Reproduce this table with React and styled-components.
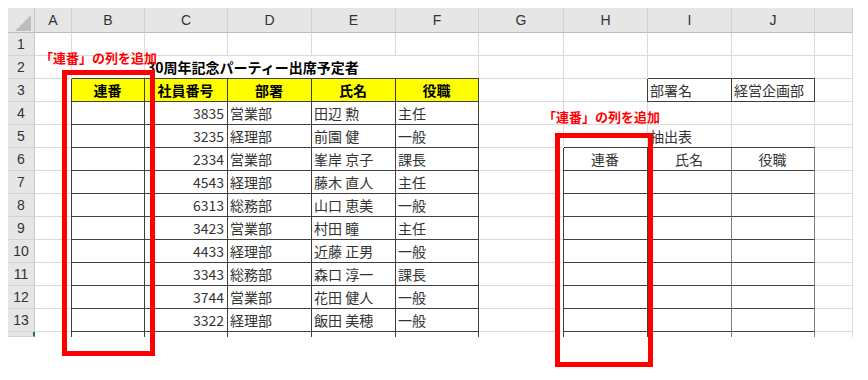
import React from "react";
import styled, { createGlobalStyle } from "styled-components";

const GlobalStyle = createGlobalStyle`
  html, body {
    margin: 0;
    padding: 0;
    background: #fff;
  }
  body {
    font-family: "Noto Sans CJK JP", "Noto Sans", sans-serif;
  }
`;

const LETTERS = ["A", "B", "C", "D", "E", "F", "G", "H", "I", "J", ""];
const WIDTHS = [37, 73, 83, 84, 84, 83, 85, 84, 84, 83, 38];
const DARK = "#3f3f3f";
const GRAY = "#808080";
const GRID = "#dadada";

const MEMBERS = [
  ["3835", "営業部", "田辺 勲", "主任"],
  ["3235", "経理部", "前園 健", "一般"],
  ["2334", "営業部", "峯岸 京子", "課長"],
  ["4543", "経理部", "藤木 直人", "主任"],
  ["6313", "総務部", "山口 恵美", "一般"],
  ["3423", "営業部", "村田 瞳", "主任"],
  ["4433", "経理部", "近藤 正男", "一般"],
  ["3343", "総務部", "森口 淳一", "課長"],
  ["3744", "営業部", "花田 健人", "一般"],
  ["3322", "経理部", "飯田 美穂", "一般"],
];

const Page = styled.div`
  position: relative;
  width: 868px;
  height: 380px;
  padding: 8px 0 0 8px;
  box-sizing: border-box;
  overflow: hidden;
`;

const Sheet = styled.div`
  display: grid;
  grid-template-columns: 27px ${WIDTHS.map((w) => w + "px").join(" ")};
  grid-template-rows: 25px repeat(13, 23px) 5px;
  width: fit-content;
`;

const Corner = styled.div`
  box-sizing: border-box;
  display: flex;
  justify-content: flex-end;
  align-items: flex-end;
  padding: 0 2px 0 0;
  background: #e6e6e6;
  border-right: 1px solid #c6c6c6;
  border-bottom: 1px solid #bdbdbd;
`;

const ColHead = styled.div`
  box-sizing: border-box;
  display: flex;
  align-items: center;
  justify-content: center;
  background: #e6e6e6;
  border-right: 1px solid #d2d2d2;
  border-bottom: 1px solid #bdbdbd;
  font: 14px "Liberation Sans", Arial, sans-serif;
  color: #333;
`;

const RowHead = styled.div`
  box-sizing: border-box;
  display: flex;
  align-items: center;
  justify-content: center;
  overflow: hidden;
  background: #e6e6e6;
  border-right: ${({ $active }) => ($active ? "2px solid #217346" : "1px solid #c6c6c6")};
  border-bottom: 1px solid #d4d4d4;
  font: 14px "Liberation Sans", Arial, sans-serif;
  color: #333;
`;

const Cell = styled.div`
  box-sizing: border-box;
  grid-column: span ${({ $span }) => $span || 1};
  display: flex;
  align-items: center;
  justify-content: ${({ $align }) =>
    $align === "right" ? "flex-end" : $align === "center" ? "center" : "flex-start"};
  padding: 0 3px 0 2px;
  background: ${({ $fill }) => $fill || "transparent"};
  border-right: 1px solid ${({ $right }) => $right || GRID};
  border-bottom: ${({ $bottom }) => ($bottom === "none" ? "none" : `1px solid ${$bottom || GRID}`)};
  box-shadow: ${({ $top, $left }) =>
    [$top && `0 -1px 0 0 ${$top}`, $left && `-1px 0 0 0 ${$left}`].filter(Boolean).join(", ") ||
    "none"};
  font-size: 14px;
  line-height: 1;
  font-weight: ${({ $bold }) => ($bold ? 700 : 400)};
  color: ${({ $bold }) => ($bold ? "#000" : "#333")};
  white-space: nowrap;
  overflow: ${({ $clip }) => ($clip ? "hidden" : "visible")};
`;

const Note = styled.div`
  position: absolute;
  left: ${({ $x }) => $x}px;
  top: ${({ $y }) => $y}px;
  color: #ff0000;
  font-size: 13px;
  font-weight: 700;
  line-height: 1;
  white-space: nowrap;
`;

const Frame = styled.div`
  position: absolute;
  left: ${({ $x }) => $x}px;
  top: ${({ $y }) => $y}px;
  width: ${({ $w }) => $w}px;
  height: ${({ $h }) => $h}px;
  box-sizing: border-box;
  border: 5px solid #ff0000;
`;

// cell settings for row r (1..14) and column c (0 = A .. 10 = K)
function cellFor(r, c) {
  const cell = {};
  const partial = r === 14;
  if (partial) {
    cell.$bottom = "none";
    cell.$clip = true;
  }

  // main table B3:F14
  if (r >= 3 && c >= 1 && c <= 5) {
    cell.$right = DARK;
    if (!partial) cell.$bottom = DARK;
    if (r === 3) cell.$top = DARK;
    if (c === 1) cell.$left = DARK;
    if (r === 3) {
      cell.text = ["連番", "社員番号", "部署", "氏名", "役職"][c - 1];
      cell.$fill = "#ffff00";
      cell.$bold = true;
      cell.$align = "center";
    } else if (r <= 13) {
      const row = MEMBERS[r - 4];
      if (c === 2) {
        cell.text = row[0];
        cell.$align = "right";
      } else if (c > 2) {
        cell.text = row[c - 2];
      }
    }
  }

  // department lookup I3:J3
  if (r === 3 && (c === 8 || c === 9)) {
    cell.text = c === 8 ? "部署名" : "経営企画部";
    cell.$right = DARK;
    cell.$bottom = DARK;
    cell.$top = DARK;
    if (c === 8) cell.$left = DARK;
  }

  if (r === 5 && c === 8) cell.text = "抽出表";

  // extract table H6:J14
  if (r >= 6 && c >= 7 && c <= 9) {
    cell.$right = c === 7 ? DARK : GRAY;
    if (!partial) cell.$bottom = DARK;
    if (r === 6) {
      cell.$top = DARK;
      cell.text = ["連番", "氏名", "役職"][c - 7];
      cell.$align = "center";
    }
    if (c === 7) cell.$left = DARK;
  }

  return cell;
}

function Row({ r }) {
  if (r === 2) {
    return (
      <>
        <RowHead>2</RowHead>
        <Cell />
        <Cell />
        <Cell $span={4} $bold>
          30周年記念パーティー出席予定者
        </Cell>
        {[6, 7, 8, 9, 10].map((c) => (
          <Cell key={c} />
        ))}
      </>
    );
  }
  return (
    <>
      <RowHead $active={r === 14}>{r < 14 ? r : ""}</RowHead>
      {LETTERS.map((_, c) => {
        const { text, ...props } = cellFor(r, c);
        return (
          <Cell key={c} {...props}>
            {text}
          </Cell>
        );
      })}
    </>
  );
}

export default function App() {
  const rows = Array.from({ length: 14 }, (_, i) => i + 1);
  return (
    <Page>
      <GlobalStyle />
      <Sheet>
        <Corner>
          <svg width="18" height="18" viewBox="0 0 18 18">
            <polygon points="1,17 17,1 17,17" fill="#bdbdbd" />
          </svg>
        </Corner>
        {LETTERS.map((l, i) => (
          <ColHead key={i}>{l}</ColHead>
        ))}
        {rows.map((r) => (
          <Row key={r} r={r} />
        ))}
      </Sheet>

      <Note $x={40} $y={51}>「連番」の列を追加</Note>
      <Frame $x={62} $y={70} $w={93} $h={286} />

      <Note $x={543} $y={110}>「連番」の列を追加</Note>
      <Frame $x={555} $y={133} $w={98} $h={234} />
    </Page>
  );
}
